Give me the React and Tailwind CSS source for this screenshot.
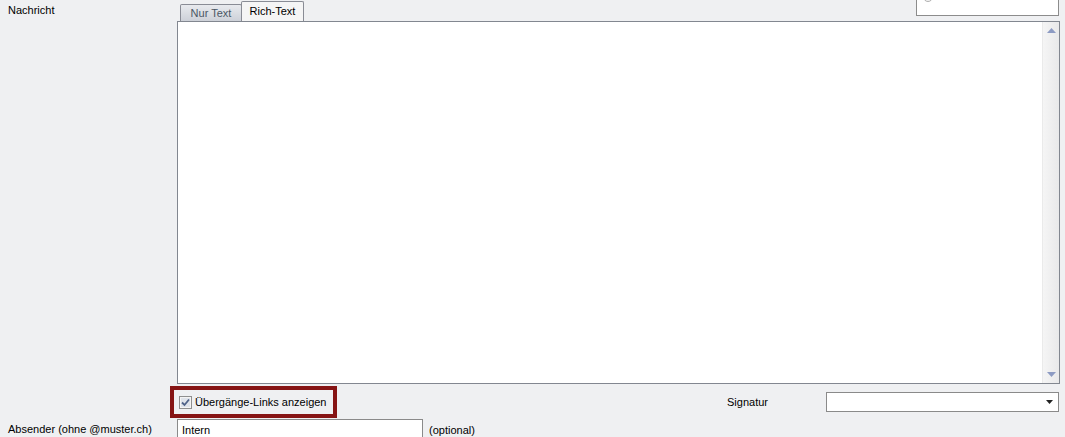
export default function App() {
  return (
    <div
      className="w-[1065px] h-[437px] overflow-hidden bg-[#eff0f2] text-[11px] text-black relative"
      style={{ fontFamily: '"Liberation Sans", Arial, sans-serif' }}
    >
      <div className="grid grid-cols-[177px_1fr]">
        {/* Nachricht row */}
        <div className="pl-[8px] pt-[4px] leading-[13px]">Nachricht</div>
        <div className="flex flex-col">
          <div className="flex items-end justify-between h-[21px] w-[882px]">
            <div className="flex items-end pl-[3px]">
              <div className="h-[17px] w-[62px] border border-b-0 border-[#898c95] rounded-t-[2px] bg-gradient-to-b from-[#e8eaee] to-[#cdd1d8] text-[#4a5664] flex items-center justify-center leading-none">
                Nur Text
              </div>
              <div className="h-[20px] w-[63px] -ml-[1px] border border-b-0 border-[#898c95] rounded-t-[2px] bg-[#f5f5f5] flex items-center justify-center leading-none">
                Rich-Text
              </div>
            </div>
            <div className="self-start h-[16px] w-[143px] border border-t-0 border-[#8c8c8c] bg-white mb-[5px] relative overflow-hidden">
              <div className="absolute left-[6px] -top-[8px] w-[10px] h-[10px] rounded-full border border-[#b0b0b0] bg-[#f4f4f4]" />
            </div>
          </div>
          <div className="h-[363px] w-[883px] border border-[#828790] bg-white flex justify-end">
            <div className="w-[17px] h-full bg-gradient-to-r from-[#f5f5f5] to-[#e9e9ea] border-l border-[#eaeaea] flex flex-col justify-between items-center py-[6px]">
              <svg width="9" height="5" viewBox="0 0 9 5">
                <path d="M0 5 L4.5 0 L9 5 Z" fill="#8d9bc3" />
              </svg>
              <svg width="9" height="5" viewBox="0 0 9 5">
                <path d="M0 0 L9 0 L4.5 5 Z" fill="#8d9bc3" />
              </svg>
            </div>
          </div>
        </div>

        {/* Checkbox / Signatur row */}
        <div />
        <div className="flex items-center mt-[2px] h-[32px]">
          <div className="-ml-[7px] h-[32px] w-[167px] border-[4px] border-[#861414] flex items-center pl-[5px] gap-[3px] whitespace-nowrap">
            <svg width="13" height="13" viewBox="0 0 13 13" className="shrink-0">
              <rect x="0.5" y="0.5" width="12" height="12" fill="#f4f4f4" stroke="#8f8f8f" />
              <rect x="2" y="2" width="9" height="9" fill="#dfe3ea" />
              <path d="M3 6.5 L5.5 9 L10 3.5" stroke="#4f6288" strokeWidth="1.8" fill="none" />
            </svg>
            <span className="leading-none">Übergänge-Links anzeigen</span>
          </div>
          <div className="ml-[390px] w-[99px] leading-none">Signatur</div>
          <div className="h-[20px] w-[233px] border border-[#8a8a8a] bg-white flex items-center justify-end pr-[5px]">
            <svg width="7" height="4" viewBox="0 0 7 4">
              <path d="M0 0 L7 0 L3.5 4 Z" fill="#222" />
            </svg>
          </div>
        </div>

        {/* Absender row */}
        <div className="pl-[8px] pt-[5px] leading-[13px] whitespace-nowrap">Absender (ohne @muster.ch)</div>
        <div className="flex items-start mt-[1px]">
          <div className="h-[21px] w-[246px] border border-[#8a8a8a] bg-white pl-[4px] pt-[4px] leading-[13px]">Intern</div>
          <div className="ml-[6px] pt-[5px] leading-[13px]">(optional)</div>
        </div>
      </div>
    </div>
  );
}
